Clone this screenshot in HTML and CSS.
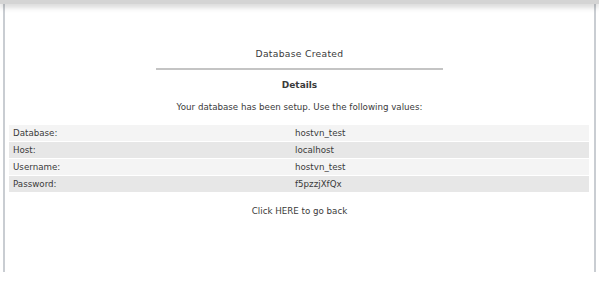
FILE: index.html
```html
<!DOCTYPE html>
<html>
<head>
<meta charset="utf-8">
<link rel="stylesheet" href="styles.css">
</head>
<body>
<div class="topbar"></div>
<div class="frame">
  <div class="content">
    <div class="title">Database Created</div>
    <div class="rule"></div>
    <div class="details">Details</div>
    <div class="intro">Your database has been setup. Use the following values:</div>
    <table class="values">
      <tr class="odd"><td class="label">Database:</td><td>hostvn_test</td></tr>
      <tr class="even"><td class="label">Host:</td><td>localhost</td></tr>
      <tr class="odd"><td class="label">Username:</td><td>hostvn_test</td></tr>
      <tr class="even"><td class="label">Password:</td><td>f5pzzjXfQx</td></tr>
    </table>
    <div class="back">Click HERE to go back</div>
  </div>
</div>
</body>
</html>
```
FILE: styles.css
```css
html, body {
  margin: 0;
  padding: 0;
  background: #ffffff;
}
body {
  font-family: "DejaVu Sans", Verdana, sans-serif;
  font-size: 8.7px;
  color: #3a3a3a;
  position: relative;
}
.topbar {
  height: 4px;
  background: #d4d4d4;
  box-shadow: 0 2px 6px rgba(0, 0, 0, 0.28);
  position: relative;
  z-index: 1;
}
.frame {
  margin: 0 3px;
  height: 268px;
  border-left: 2px solid #c9cdd2;
  border-right: 2px solid #c9cdd2;
  box-sizing: border-box;
}
.content {
  padding-top: 44px;
  text-align: center;
}
.title {
  font-size: 9.2px;
  letter-spacing: 0.3px;
  line-height: 12px;
}
.rule {
  width: 287px;
  height: 2px;
  background: #c4c4c4;
  margin: 8px auto 0;
}
.details {
  font-weight: bold;
  font-size: 9px;
  line-height: 12px;
  margin-top: 9px;
}
.intro {
  line-height: 12px;
  margin-top: 10px;
}
.values {
  width: 580px;
  margin: 11px 0 0 4px;
  border-collapse: separate;
  border-spacing: 0 1px;
  text-align: left;
}
.values td {
  height: 16px;
  padding: 0 0 0 4px;
  line-height: 16px;
}
.values td.label {
  width: 278px;
}
.odd td {
  background: #f4f4f4;
}
.even td {
  background: #e7e7e7;
}
.back {
  margin-top: 12px;
  line-height: 12px;
}
```
